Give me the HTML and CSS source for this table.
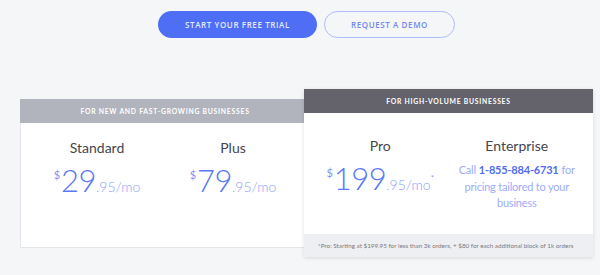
FILE: index.html
```html
<!DOCTYPE html>
<html lang="en">
<head>
<meta charset="utf-8">
<title>Pricing</title>
<link rel="stylesheet" href="styles.css">
</head>
<body>
<div class="page">
  <div class="ctas">
    <a class="btn btn-primary" href="#">START YOUR FREE TRIAL</a>
    <a class="btn btn-outline" href="#">REQUEST A DEMO</a>
  </div>
  <div class="plans">
    <section class="card card-basic">
      <header class="card-head">FOR NEW AND FAST-GROWING BUSINESSES</header>
      <div class="card-body">
        <div class="plan">
          <h3 class="plan-name">Standard</h3>
          <div class="price"><span class="cur">$</span><span class="amt">29</span><span class="cents">.95/mo</span></div>
        </div>
        <div class="plan">
          <h3 class="plan-name">Plus</h3>
          <div class="price"><span class="cur">$</span><span class="amt">79</span><span class="cents">.95/mo</span></div>
        </div>
      </div>
    </section>
    <section class="card card-pro">
      <header class="card-head">FOR HIGH-VOLUME BUSINESSES</header>
      <div class="card-body">
        <div class="plan">
          <h3 class="plan-name">Pro</h3>
          <div class="price"><span class="cur">$</span><span class="amt">199</span><span class="cents">.95/mo</span><span class="ast">*</span></div>
        </div>
        <div class="plan">
          <h3 class="plan-name">Enterprise</h3>
          <p class="call">
            <span class="call-line"><span>Call</span><strong>1-855-884-6731</strong><span>for</span></span>
            <span class="call-line">pricing tailored to your</span>
            <span class="call-line">business</span>
          </p>
        </div>
      </div>
      <footer class="card-foot">*Pro: Starting at $199.95 for less than 3k orders, + $80 for each additional block of 1k orders</footer>
    </section>
  </div>
</div>
</body>
</html>
```
FILE: styles.css
```css
* { box-sizing: border-box; }
html, body { margin: 0; padding: 0; }
body {
  background: #f5f6f8;
  font-family: Lato, "Open Sans", "Liberation Sans", sans-serif;
  color: #3c3c44;
  width: 600px;
  height: 275px;
  overflow: hidden;
}
.page { padding-top: 11px; }

.ctas {
  display: flex;
  justify-content: center;
  gap: 7px;
  padding-left: 13px;
}
.btn {
  display: flex;
  align-items: center;
  justify-content: center;
  height: 27px;
  border-radius: 14px;
  font-family: "Open Sans", "Liberation Sans", sans-serif;
  font-size: 8px;
  font-weight: 600;
  letter-spacing: 0.6px;
  text-decoration: none;
}
.btn-primary {
  width: 159px;
  background: #4f6ef6;
  color: #e3e9ff;
}
.btn-outline {
  width: 131px;
  border: 1px solid #aebcf8;
  color: #7189f2;
  background: transparent;
}

.plans {
  display: flex;
  align-items: flex-start;
  margin-top: 51px;
  padding-left: 20px;
}
.card { background: #fff; }
.card-head {
  height: 24px;
  display: flex;
  align-items: center;
  justify-content: center;
  color: #fff;
  font-size: 6.8px;
  font-weight: 700;
  letter-spacing: 0.75px;
}
.card-basic {
  width: 290px;
  height: 149px;
  margin-top: 10px;
  border: 1px solid #e4e5e9;
  border-top: 0;
}
.card-basic .card-head { background: #b1b4bd; margin: 0 -1px; }
.card-pro {
  position: relative;
  z-index: 1;
  width: 289px;
  margin-left: -6px;
  box-shadow: 0 1px 4px rgba(0, 0, 0, 0.12);
}
.card-pro .card-head { background: #64636c; }

.card-body {
  display: grid;
  grid-template-columns: 1fr 1fr;
  padding: 15px 8px 0;
}
.card-pro .card-body {
  height: 121px;
  padding-top: 23px;
}
.plan { text-align: center; }
.plan-name {
  margin: 0;
  font-size: 14px;
  line-height: 20px;
  font-weight: 400;
  color: #45454d;
}
.price {
  margin-top: 1px;
  color: #5b79f3;
  line-height: 32px;
  white-space: nowrap;
}
.cur {
  font-size: 11px;
  vertical-align: 13px;
  color: #7f95f4;
  margin-right: 1px;
}
.amt {
  font-size: 31px;
  font-weight: 300;
  letter-spacing: -0.5px;
}
.cents {
  font-size: 14px;
  font-weight: 300;
  color: #8a9ef5;
}
.ast {
  font-size: 8px;
  vertical-align: 9px;
  color: #8a9ef5;
}
.call {
  margin: 6px 0 0;
  display: flex;
  flex-direction: column;
  align-items: center;
  font-size: 11px;
  line-height: 16.5px;
  letter-spacing: -0.2px;
  color: #9cadf6;
}
.call-line {
  display: flex;
  gap: 3px;
  white-space: nowrap;
}
.call strong { color: #4f6ef0; font-weight: 700; }

.card-foot {
  height: 23px;
  background: #eeeff2;
  display: flex;
  align-items: center;
  padding-left: 14px;
  font-size: 6.3px;
  white-space: nowrap;
  color: #7a7a82;
}
```
